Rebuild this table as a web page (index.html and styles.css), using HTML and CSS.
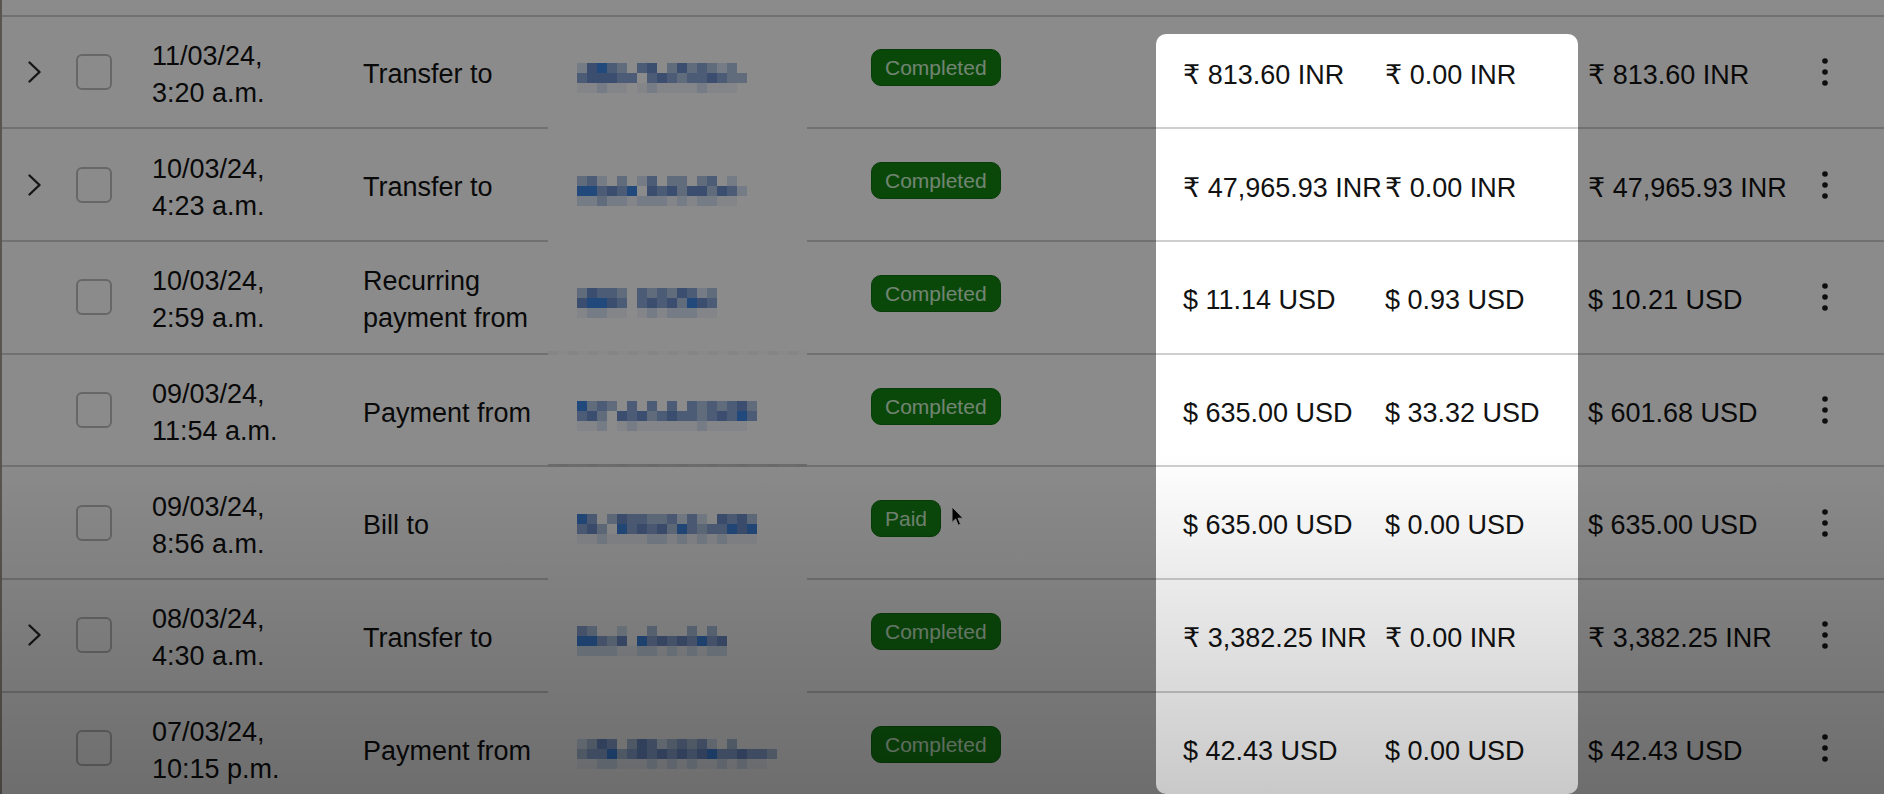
FILE: index.html
```html
<!DOCTYPE html>
<html lang="en">
<head>
<meta charset="utf-8">
<title>Transactions</title>
<link rel="stylesheet" href="styles.css">
</head>
<body>
<div class="table">
  <div class="prev"></div>

  <div class="row">
    <div class="c-exp"><svg class="chev" viewBox="0 0 13 22" width="13" height="22"><polyline points="1.5,1.5 11.5,11 1.5,20.5"/></svg></div>
    <div class="c-chk"><span class="box"></span></div>
    <div class="c-date">11/03/24, 3:20 a.m.</div>
    <div class="c-desc">Transfer to</div>
    <div class="c-contact"><div class="mosaic" data-m="256430450353432300|455544045434454330|112110121111211100"></div></div>
    <div class="c-status"><span class="badge">Completed</span></div>
    <div class="c-gross">₹ 813.60 INR</div>
    <div class="c-fee">₹ 0.00 INR</div>
    <div class="c-net">₹ 813.60 INR</div>
    <div class="c-kebab"><svg class="kebab" viewBox="0 0 6 28" width="6" height="28"><circle cx="3" cy="3" r="2.8"/><circle cx="3" cy="14" r="2.8"/><circle cx="3" cy="25" r="2.8"/></svg></div>
  </div>

  <div class="row">
    <div class="c-exp"><svg class="chev" viewBox="0 0 13 22" width="13" height="22"><polyline points="1.5,1.5 11.5,11 1.5,20.5"/></svg></div>
    <div class="c-chk"><span class="box"></span></div>
    <div class="c-date">10/03/24, 4:23 a.m.</div>
    <div class="c-desc">Transfer to</div>
    <div class="c-contact"><div class="mosaic" data-m="342030240330340200|664546054535535420|223221222121221100"></div></div>
    <div class="c-status"><span class="badge">Completed</span></div>
    <div class="c-gross">₹ 47,965.93 INR</div>
    <div class="c-fee">₹ 0.00 INR</div>
    <div class="c-net">₹ 47,965.93 INR</div>
    <div class="c-kebab"><svg class="kebab" viewBox="0 0 6 28" width="6" height="28"><circle cx="3" cy="3" r="2.8"/><circle cx="3" cy="14" r="2.8"/><circle cx="3" cy="25" r="2.8"/></svg></div>
  </div>

  <div class="row">
    <div class="c-exp"></div>
    <div class="c-chk"><span class="box"></span></div>
    <div class="c-date">10/03/24, 2:59 a.m.</div>
    <div class="c-desc">Recurring payment from</div>
    <div class="c-contact c-faint"><div class="mosaic" data-m="3544304343542300|5665404545365400|1221101212221100"></div></div>
    <div class="c-status"><span class="badge">Completed</span></div>
    <div class="c-gross">$ 11.14 USD</div>
    <div class="c-fee">$ 0.93 USD</div>
    <div class="c-net">$ 10.21 USD</div>
    <div class="c-kebab"><svg class="kebab" viewBox="0 0 6 28" width="6" height="28"><circle cx="3" cy="3" r="2.8"/><circle cx="3" cy="14" r="2.8"/><circle cx="3" cy="25" r="2.8"/></svg></div>
  </div>

  <div class="row">
    <div class="c-exp"></div>
    <div class="c-chk"><span class="box"></span></div>
    <div class="c-date">09/03/24, 11:54 a.m.</div>
    <div class="c-desc">Payment from</div>
    <div class="c-contact c-bar"><div class="mosaic" data-m="634304040404343453|453054534544345464|112012111111211110"></div></div>
    <div class="c-status"><span class="badge">Completed</span></div>
    <div class="c-gross">$ 635.00 USD</div>
    <div class="c-fee">$ 33.32 USD</div>
    <div class="c-net">$ 601.68 USD</div>
    <div class="c-kebab"><svg class="kebab" viewBox="0 0 6 28" width="6" height="28"><circle cx="3" cy="3" r="2.8"/><circle cx="3" cy="14" r="2.8"/><circle cx="3" cy="25" r="2.8"/></svg></div>
  </div>

  <div class="row">
    <div class="c-exp"></div>
    <div class="c-chk"><span class="box"></span></div>
    <div class="c-date">09/03/24, 8:56 a.m.</div>
    <div class="c-desc">Bill to</div>
    <div class="c-contact"><div class="mosaic" data-m="640354433424205453|453064545364344656|112111122121212111"></div></div>
    <div class="c-status"><span class="badge">Paid</span></div>
    <div class="c-gross">$ 635.00 USD</div>
    <div class="c-fee">$ 0.00 USD</div>
    <div class="c-net">$ 635.00 USD</div>
    <div class="c-kebab"><svg class="kebab" viewBox="0 0 6 28" width="6" height="28"><circle cx="3" cy="3" r="2.8"/><circle cx="3" cy="14" r="2.8"/><circle cx="3" cy="25" r="2.8"/></svg></div>
  </div>

  <div class="row">
    <div class="c-exp"><svg class="chev" viewBox="0 0 13 22" width="13" height="22"><polyline points="1.5,1.5 11.5,11 1.5,20.5"/></svg></div>
    <div class="c-chk"><span class="box"></span></div>
    <div class="c-date">08/03/24, 4:30 a.m.</div>
    <div class="c-desc">Transfer to</div>
    <div class="c-contact"><div class="mosaic" data-m="43002003000303000|66435064545464500|22221122121212200"></div></div>
    <div class="c-status"><span class="badge">Completed</span></div>
    <div class="c-gross">₹ 3,382.25 INR</div>
    <div class="c-fee">₹ 0.00 INR</div>
    <div class="c-net">₹ 3,382.25 INR</div>
    <div class="c-kebab"><svg class="kebab" viewBox="0 0 6 28" width="6" height="28"><circle cx="3" cy="3" r="2.8"/><circle cx="3" cy="14" r="2.8"/><circle cx="3" cy="25" r="2.8"/></svg></div>
  </div>

  <div class="row">
    <div class="c-exp"></div>
    <div class="c-chk"><span class="box"></span></div>
    <div class="c-date">07/03/24, 10:15 p.m.</div>
    <div class="c-desc">Payment from</div>
    <div class="c-contact"><div class="mosaic" data-m="23540354234342030000|34463454545456445443|11221112121211212110"></div></div>
    <div class="c-status"><span class="badge">Completed</span></div>
    <div class="c-gross">$ 42.43 USD</div>
    <div class="c-fee">$ 0.00 USD</div>
    <div class="c-net">$ 42.43 USD</div>
    <div class="c-kebab"><svg class="kebab" viewBox="0 0 6 28" width="6" height="28"><circle cx="3" cy="3" r="2.8"/><circle cx="3" cy="14" r="2.8"/><circle cx="3" cy="25" r="2.8"/></svg></div>
  </div>
</div>

<svg class="cursor" viewBox="0 0 13 21" width="13" height="21"><path d="M1 1 L1 16.5 L4.6 13 L7.2 19.2 L9.6 18.2 L7 12.2 L12 12.2 Z"/></svg>
<div class="spot"></div>
<div class="shade"></div>

<script src="script.js"></script>
</body>
</html>
```

FILE: styles.css
```css
:root {
  --line: #cfcfcf;
}

html, body {
  margin: 0;
  padding: 0;
}

body {
  width: 1884px;
  height: 794px;
  overflow: hidden;
  position: relative;
  background: #ffffff;
  color: #121212;
  font-family: "Liberation Sans", Arial, "DejaVu Sans", sans-serif;
}

.table {
  border-left: 2px solid #a69c90;
  min-height: 794px;
  box-sizing: border-box;
}

.prev {
  height: 14.6px;
  border-bottom: 2px solid var(--line);
}

.row {
  display: grid;
  grid-template-columns: 74px 76px 211px 185px 259px 349px 229px 193px 222px 1fr;
  align-items: center;
  height: 112.7px;
  box-sizing: border-box;
  border-bottom: 2px solid var(--line);
  font-size: 27px;
}

.c-exp {
  padding-left: 26px;
  display: flex;
  align-items: center;
}

.chev {
  fill: none;
  stroke: #2a2a2a;
  stroke-width: 2.4;
  stroke-linecap: round;
  stroke-linejoin: round;
}

.c-chk {
  display: flex;
  align-items: center;
}

.box {
  width: 36px;
  height: 36px;
  box-sizing: border-box;
  border: 2px solid #bdbdbd;
  border-radius: 6px;
}

.c-date,
.c-desc,
.c-gross,
.c-fee,
.c-net {
  padding-top: 6px;
}

.c-date,
.c-desc {
  line-height: 37px;
}

.c-date {
  padding-right: 74px;
}

.c-desc {
  padding-right: 4px;
}

.c-contact {
  align-self: stretch;
  margin-bottom: -2px;
  background: #ffffff;
  display: flex;
  align-items: center;
  padding-left: 29px;
  position: relative;
}

.c-faint::after {
  content: "";
  position: absolute;
  left: 0;
  right: 0;
  bottom: -6px;
  height: 10px;
  background: repeating-linear-gradient(to right, #f5f5f5 0 10px, #fbfbfb 10px 20px);
}

.c-bar::after {
  content: "";
  position: absolute;
  left: 0;
  right: 0;
  bottom: -7px;
  height: 10px;
  background: repeating-linear-gradient(to right, #c6c6c6 0 10px, #c2c2c2 10px 20px, #c9c9c9 20px 30px);
}

.mosaic {
  display: grid;
  grid-auto-columns: 10px;
  grid-template-rows: repeat(3, 10px);
  grid-auto-flow: column;
  margin-top: 10px;
}

.mosaic i {
  display: block;
  width: 10px;
  height: 10px;
}

.mosaic .b0 { background: transparent; }
.mosaic .b1 { background: #f0f5fc; }
.mosaic .b2 { background: #d6e3f4; }
.mosaic .b3 { background: #b1c6e4; }
.mosaic .b4 { background: #8ea9d8; }
.mosaic .b5 { background: #6f90cc; }
.mosaic .b6 { background: #3f86e2; }

.c-status {
  padding-left: 64px;
  display: flex;
  align-items: center;
}

.badge {
  display: inline-block;
  height: 37px;
  line-height: 35px;
  box-sizing: border-box;
  padding: 0 13px;
  border: 1px solid #0f6e0f;
  border-radius: 10px;
  background: #148414;
  color: #d2f2d2;
  font-size: 21px;
  margin-bottom: 8px;
}

.c-gross {
  padding-left: 27px;
  white-space: nowrap;
}

.c-fee,
.c-net {
  white-space: nowrap;
}

.c-net {
  padding-left: 10px;
}

.c-kebab {
  padding-left: 22px;
  display: flex;
  align-items: center;
}

.kebab {
  fill: #1a1a1a;
}

.cursor {
  position: absolute;
  left: 951px;
  top: 506px;
  fill: #000000;
  stroke: #ffffff;
  stroke-width: 1;
}

.spot {
  position: absolute;
  left: 1156px;
  top: 34px;
  width: 422px;
  height: 760px;
  border-radius: 10px;
  box-shadow: 0 0 0 4000px rgba(0, 0, 0, 0.455);
  pointer-events: none;
}

.shade {
  position: absolute;
  inset: 0;
  background: linear-gradient(to bottom, rgba(0, 0, 0, 0) 57%, rgba(0, 0, 0, 0.21) 100%);
  pointer-events: none;
}
```

FILE: script.js
```js
document.querySelectorAll('.mosaic').forEach(function (m) {
  var rows = m.getAttribute('data-m').split('|');
  var cols = rows[0].length;
  for (var c = 0; c < cols; c++) {
    for (var r = 0; r < rows.length; r++) {
      var i = document.createElement('i');
      i.className = 'b' + (rows[r].charAt(c) || '0');
      m.appendChild(i);
    }
  }
});
```
